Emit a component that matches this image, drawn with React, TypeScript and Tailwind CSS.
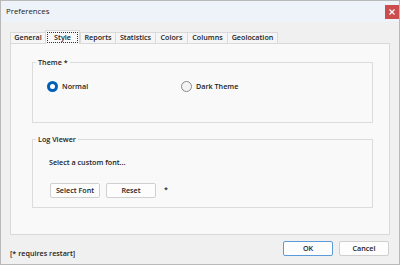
import React from "react";

const tabs: { label: string; w: string; selected?: boolean }[] = [
  { label: "General", w: "w-[35px]" },
  { label: "Style", w: "w-[35px]", selected: true },
  { label: "Reports", w: "w-[35px]" },
  { label: "Statistics", w: "w-[40px]" },
  { label: "Colors", w: "w-[32px]" },
  { label: "Columns", w: "w-[40px]" },
  { label: "Geolocation", w: "w-[51px]" },
];

function Btn({ children, primary }: { children: React.ReactNode; primary?: boolean }) {
  return (
    <div
      className={
        "w-[50px] h-[15px] rounded-[2px] bg-[#fdfdfd] flex items-center justify-center leading-none border " +
        (primary ? "border-[#5b9bd9]" : "border-[#d0d0d0]")
      }
    >
      {children}
    </div>
  );
}

export default function App() {
  return (
    <div
      className="w-[400px] h-[265px] bg-[#f0f0f0] border border-[#b9b9b9] flex flex-col text-[7.2px] font-semibold text-[#222]"
      style={{ fontFamily: '"Open Sans", "Noto Sans", sans-serif' }}
    >
      {/* title bar */}
      <div className="h-[21px] bg-[#eef2f9] flex items-center justify-between pl-[5px] pr-[0px]">
        <span className="text-[7.8px] font-medium">Preferences</span>
        <div className="w-[14px] h-[14px] bg-[#cc4d4d] flex items-center justify-center mt-[0px]">
          <svg width="6" height="6" viewBox="0 0 6 6">
            <path d="M0.5 0.5 L5.5 5.5 M5.5 0.5 L0.5 5.5" stroke="#ffffff" strokeWidth="1.2" />
          </svg>
        </div>
      </div>

      {/* body */}
      <div className="flex-1 flex flex-col px-[9px] pt-[8px]">
        {/* tabs */}
        <div className="flex items-end h-[13px] relative z-10">
          {tabs.map((t) =>
            t.selected ? (
              <div
                key={t.label}
                className={`${t.w} h-[14px] -mb-px bg-[#f9f9f9] border border-b-0 border-[#d9d9d9] flex items-stretch p-[1px] pb-[1px]`}
              >
                <div className="flex-1 border border-dotted border-[#333] flex items-center justify-center leading-none">
                  {t.label}
                </div>
              </div>
            ) : (
              <div
                key={t.label}
                className={`${t.w} h-[11px] bg-[#f5f5f5] border border-b-0 border-r-0 border-[#dadada] last:border-r flex items-center justify-center leading-none`}
              >
                {t.label}
              </div>
            )
          )}
        </div>

        {/* panel */}
        <div className="h-[192px] bg-[#f9f9f9] border border-[#d9d9d9] pt-[18px] pl-[21px] pr-[16px] flex flex-col">
          {/* Theme group */}
          <div className="relative h-[61px] border border-[#dcdcdc]">
            <span className="absolute -top-[6px] left-[3px] px-[2px] bg-[#f9f9f9] leading-[10px]">
              Theme *
            </span>
            <div className="flex items-center pt-[18px] pl-[14px]">
              <div className="w-[134px] flex items-center gap-[4px]">
                <div className="w-[11px] h-[11px] rounded-full bg-[#005fb8] flex items-center justify-center">
                  <div className="w-[5px] h-[5px] rounded-full bg-white" />
                </div>
                <span className="leading-none">Normal</span>
              </div>
              <div className="flex items-center gap-[4px]">
                <div className="w-[11px] h-[11px] rounded-full border border-[#8a8a8a] bg-[#f4f4f4]" />
                <span className="leading-none">Dark Theme</span>
              </div>
            </div>
          </div>

          {/* Log Viewer group */}
          <div className="relative mt-[16px] h-[69px] border border-[#dcdcdc] pl-[16px] pt-[17px]">
            <span className="absolute -top-[6px] left-[3px] px-[2px] bg-[#f9f9f9] leading-[10px]">
              Log Viewer
            </span>
            <div className="leading-[10px]">Select a custom font...</div>
            <div className="flex items-start gap-[6px] mt-[16px] pl-[1px]">
              <Btn>Select Font</Btn>
              <Btn>Reset</Btn>
              <span className="ml-[2px] leading-[10px] mt-[1px]">*</span>
            </div>
          </div>
        </div>

        {/* footer */}
        <div className="flex justify-between flex-1 pt-[6px] pr-[1px]">
          <span className="mt-[7px] leading-[10px]">[* requires restart]</span>
          <div className="flex gap-[6px]">
            <Btn primary>OK</Btn>
            <Btn>Cancel</Btn>
          </div>
        </div>
      </div>
    </div>
  );
}
